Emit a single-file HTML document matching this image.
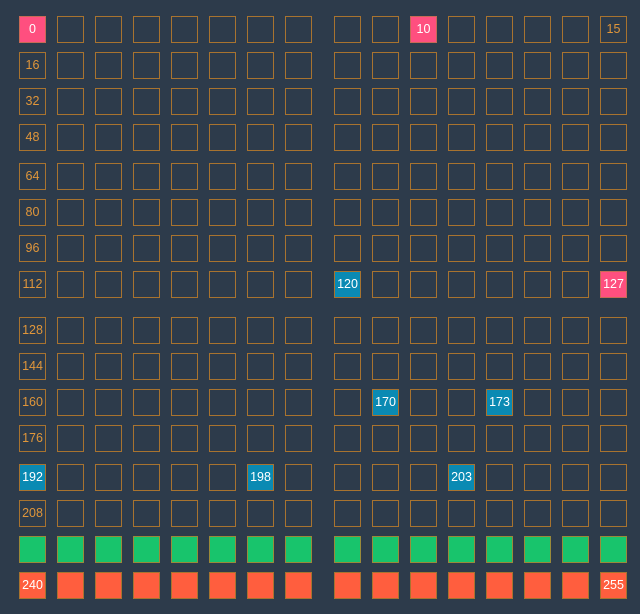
<!DOCTYPE html>
<html><head><meta charset="utf-8"><style>
html,body{margin:0;padding:0;background:#2d3b4b;width:640px;height:614px;overflow:hidden}
.g{position:absolute;left:19px;top:16px;display:grid;grid-template-columns:repeat(8,27px) 38px repeat(7,27px);grid-template-rows:27px 27px 27px 30px 27px 27px 27px 37px 27px 27px 27px 30px 27px 27px 27px 27px;gap:9px 11px}
.g i{display:block;width:27px;height:27px;box-sizing:border-box;border:1px solid #a8732f;align-self:start;font:normal 12.5px/25px "Liberation Sans",sans-serif;color:#e0963a;text-align:center}
.g i:nth-child(16n+9){justify-self:end}
.g i.p{background:#ff4f7f;color:#fff;border-color:#c86a55}
.g i.b{background:#0a8ab3;color:#fff}
.g i.n{background:#18c46c;border-color:#9a8a3a}
.g i.r{background:#ff5e3e;color:#fff}
</style></head><body><div class="g">
<i class="p">0</i><i></i><i></i><i></i><i></i><i></i><i></i><i></i><i></i><i></i><i class="p">10</i><i></i><i></i><i></i><i></i><i>15</i>
<i>16</i><i></i><i></i><i></i><i></i><i></i><i></i><i></i><i></i><i></i><i></i><i></i><i></i><i></i><i></i><i></i>
<i>32</i><i></i><i></i><i></i><i></i><i></i><i></i><i></i><i></i><i></i><i></i><i></i><i></i><i></i><i></i><i></i>
<i>48</i><i></i><i></i><i></i><i></i><i></i><i></i><i></i><i></i><i></i><i></i><i></i><i></i><i></i><i></i><i></i>
<i>64</i><i></i><i></i><i></i><i></i><i></i><i></i><i></i><i></i><i></i><i></i><i></i><i></i><i></i><i></i><i></i>
<i>80</i><i></i><i></i><i></i><i></i><i></i><i></i><i></i><i></i><i></i><i></i><i></i><i></i><i></i><i></i><i></i>
<i>96</i><i></i><i></i><i></i><i></i><i></i><i></i><i></i><i></i><i></i><i></i><i></i><i></i><i></i><i></i><i></i>
<i>112</i><i></i><i></i><i></i><i></i><i></i><i></i><i></i><i class="b">120</i><i></i><i></i><i></i><i></i><i></i><i></i><i class="p">127</i>
<i>128</i><i></i><i></i><i></i><i></i><i></i><i></i><i></i><i></i><i></i><i></i><i></i><i></i><i></i><i></i><i></i>
<i>144</i><i></i><i></i><i></i><i></i><i></i><i></i><i></i><i></i><i></i><i></i><i></i><i></i><i></i><i></i><i></i>
<i>160</i><i></i><i></i><i></i><i></i><i></i><i></i><i></i><i></i><i class="b">170</i><i></i><i></i><i class="b">173</i><i></i><i></i><i></i>
<i>176</i><i></i><i></i><i></i><i></i><i></i><i></i><i></i><i></i><i></i><i></i><i></i><i></i><i></i><i></i><i></i>
<i class="b">192</i><i></i><i></i><i></i><i></i><i></i><i class="b">198</i><i></i><i></i><i></i><i></i><i class="b">203</i><i></i><i></i><i></i><i></i>
<i>208</i><i></i><i></i><i></i><i></i><i></i><i></i><i></i><i></i><i></i><i></i><i></i><i></i><i></i><i></i><i></i>
<i class="n"></i><i class="n"></i><i class="n"></i><i class="n"></i><i class="n"></i><i class="n"></i><i class="n"></i><i class="n"></i><i class="n"></i><i class="n"></i><i class="n"></i><i class="n"></i><i class="n"></i><i class="n"></i><i class="n"></i><i class="n"></i>
<i class="r">240</i><i class="r"></i><i class="r"></i><i class="r"></i><i class="r"></i><i class="r"></i><i class="r"></i><i class="r"></i><i class="r"></i><i class="r"></i><i class="r"></i><i class="r"></i><i class="r"></i><i class="r"></i><i class="r"></i><i class="r">255</i>
</div></body></html>
